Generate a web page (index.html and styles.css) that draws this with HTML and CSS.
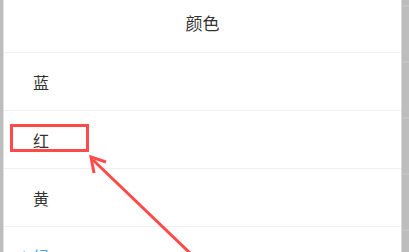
FILE: index.html
```html
<!DOCTYPE html>
<html lang="zh">
<head>
<meta charset="utf-8">
<link rel="stylesheet" href="styles.css">
</head>
<body>
<div class="screen">
  <div class="side side-left"></div>
  <div class="dialog">
    <div class="title">颜色</div>
    <div class="row">蓝</div>
    <div class="row">红</div>
    <div class="row">黄</div>
    <div class="row row-active"><span class="check">✓</span>绿</div>
  </div>
  <div class="side side-right"></div>
  <svg class="annot" width="409" height="252" viewBox="0 0 409 252">
    <rect x="11.5" y="125.5" width="76" height="25" fill="none" stroke="#ff4a4a" stroke-width="3"/>
    <line x1="191" y1="254" x2="93" y2="160" stroke="#ff4a4a" stroke-width="3"/>
    <polyline points="106,162 91,157 94,173" fill="none" stroke="#ff4a4a" stroke-width="3" stroke-linejoin="miter"/>
  </svg>
</div>
</body>
</html>
```
FILE: styles.css
```css
html, body {
  margin: 0;
  padding: 0;
}
body {
  width: 409px;
  height: 252px;
  overflow: hidden;
  background: #bdbdbd;
  font-family: "Noto Sans CJK SC", "Noto Sans", sans-serif;
}
.screen {
  position: relative;
  display: flex;
  width: 409px;
  height: 252px;
  overflow: hidden;
}
.side {
  background: #bdbdbd;
}
.side-left {
  width: 4px;
  border-right: 1px solid #e2e2e2;
  box-sizing: border-box;
}
.side-right {
  width: 8px;
  border-left: 1px solid #d8d8d8;
  box-sizing: border-box;
  background: repeating-linear-gradient(to bottom, #bdbdbd 0, #bdbdbd 5px, #c4c4c4 5px, #c4c4c4 7px, #bdbdbd 7px, #bdbdbd 56px);
}
.dialog {
  flex: 1;
  background: #fff;
  display: flex;
  flex-direction: column;
}
.title {
  height: 53px;
  flex-shrink: 0;
  box-sizing: border-box;
  border-bottom: 1px solid #f0f0f0;
  text-align: center;
  font-size: 17px;
  line-height: 46px;
  color: #333;
}
.row {
  height: 58px;
  flex-shrink: 0;
  box-sizing: border-box;
  border-bottom: 1px solid #f0f0f0;
  display: flex;
  align-items: center;
  padding-left: 29px;
  font-size: 16px;
  color: #333;
}
.row-active {
  color: #4a9ff0;
  padding-left: 12px;
}
.check {
  display: inline-block;
  width: 17px;
  font-size: 13px;
}
.annot {
  position: absolute;
  left: 0;
  top: 0;
  pointer-events: none;
}
```
